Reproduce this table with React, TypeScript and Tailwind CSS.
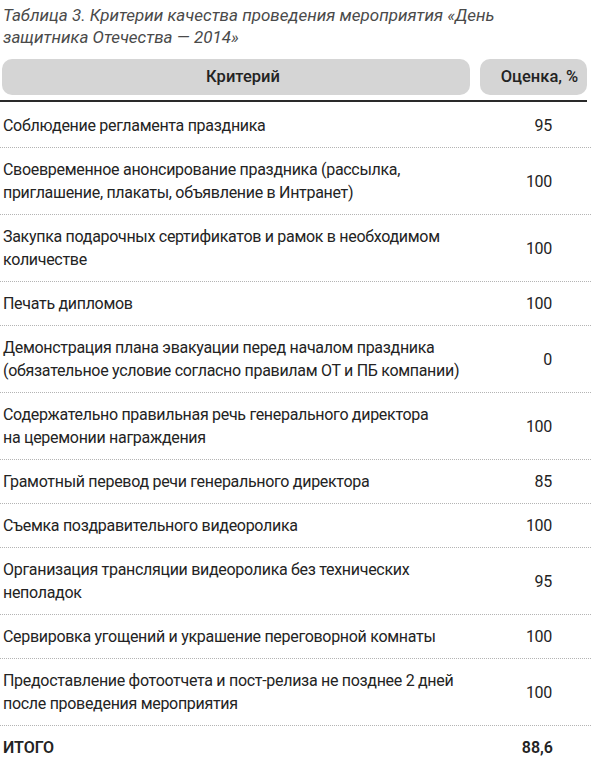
import React from "react";

type Row = { lines: string[]; value: string };

const rows: Row[] = [
  { lines: ["Соблюдение регламента праздника"], value: "95" },
  {
    lines: [
      "Своевременное анонсирование праздника (рассылка,",
      "приглашение, плакаты, объявление в Интранет)",
    ],
    value: "100",
  },
  {
    lines: [
      "Закупка подарочных сертификатов и рамок в необходимом",
      "количестве",
    ],
    value: "100",
  },
  { lines: ["Печать дипломов"], value: "100" },
  {
    lines: [
      "Демонстрация плана эвакуации перед началом праздника",
      "(обязательное условие согласно правилам ОТ и ПБ компании)",
    ],
    value: "0",
  },
  {
    lines: [
      "Содержательно правильная речь генерального директора",
      "на церемонии награждения",
    ],
    value: "100",
  },
  { lines: ["Грамотный перевод речи генерального директора"], value: "85" },
  { lines: ["Съемка поздравительного видеоролика"], value: "100" },
  {
    lines: ["Организация трансляции видеоролика без технических", "неполадок"],
    value: "95",
  },
  {
    lines: ["Сервировка угощений и украшение переговорной комнаты"],
    value: "100",
  },
  {
    lines: [
      "Предоставление фотоотчета и пост-релиза не позднее 2 дней",
      "после проведения мероприятия",
    ],
    value: "100",
  },
];

export default function App() {
  return (
    <div className="w-[591px] h-[772px] overflow-hidden bg-white text-[#232323] font-['Roboto',sans-serif]">
      <div className="pl-[3px] pt-[4px] italic text-[17px] leading-[22px] text-[#4a4a4a] whitespace-nowrap">
        <div>Таблица 3. Критерии качества проведения мероприятия «День</div>
        <div>защитника Отечества — 2014»</div>
      </div>

      <div className="mt-[11px] flex gap-[10px] pl-[2px] pr-[4px]">
        <div className="w-[468px] h-[36px] rounded-[10px] bg-[#d5d5d5] flex items-center justify-center pl-[14px] text-[16.5px] font-medium">
          Критерий
        </div>
        <div className="flex-1 h-[36px] rounded-[10px] bg-[#d5d5d5] flex items-center justify-center pl-[12px] text-[16.5px] font-medium whitespace-nowrap">
          Оценка, %
        </div>
      </div>
      <div className="mt-[5px] mr-[4px] h-[2px] bg-[#2a2a2a]" />

      <div className="pt-[2px]">
        {rows.map((r, i) => (
          <div
            key={i}
            className="flex items-center pt-[10px] pb-[10px] border-b border-dotted border-[#b4b4b4] text-[16px] leading-[23px] tracking-[-0.3px]"
          >
            <div className="w-[477px] pl-[3px] whitespace-nowrap">
              {r.lines.map((l, j) => (
                <div key={j}>{l}</div>
              ))}
            </div>
            <div className="w-[114px] pr-[39px] text-right">{r.value}</div>
          </div>
        ))}
        <div className="flex items-center pt-[10px] pb-[10px] text-[16px] leading-[23px] font-semibold">
          <div className="w-[477px] pl-[3px]">ИТОГО</div>
          <div className="w-[114px] pr-[38px] text-right">88,6</div>
        </div>
      </div>
    </div>
  );
}
